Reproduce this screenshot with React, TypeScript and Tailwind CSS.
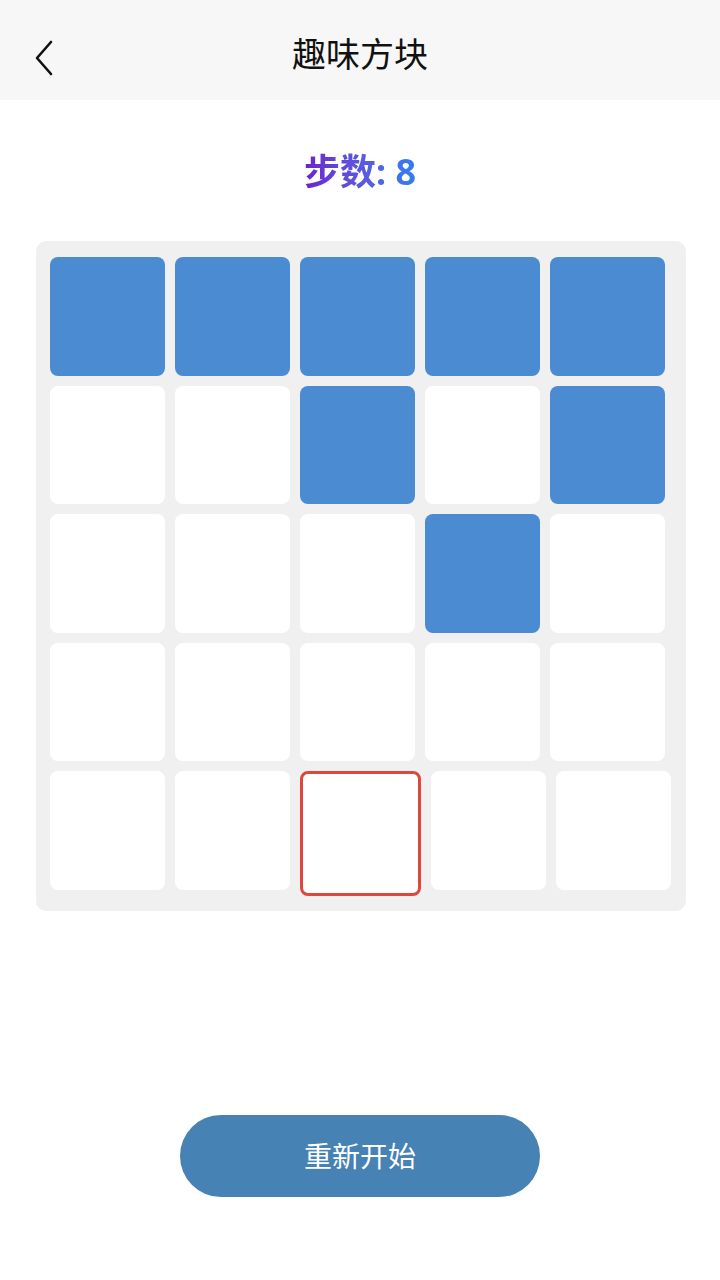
import React, { useState } from 'react';

// 5x5 棋盘初始状态：1 表示已点亮
const initialBoard: number[][] = [
  [1, 1, 1, 1, 1],
  [0, 0, 1, 0, 1],
  [0, 0, 0, 1, 0],
  [0, 0, 0, 0, 0],
  [0, 0, 0, 0, 0],
];

const App: React.FC = () => {
  const [board] = useState(initialBoard);
  const [steps] = useState(8);
  const [selected] = useState<[number, number]>([4, 2]);

  return (
    <div
      className="min-h-screen bg-white flex flex-col"
      style={{ fontFamily: '"Noto Sans", "Noto Sans CJK SC", sans-serif' }}
    >
      {/* 顶部导航栏 */}
      <header className="h-[100px] bg-[#f7f7f7] flex items-center relative">
        <button className="absolute left-[28px] top-[38px] w-[32px] h-[40px] flex items-center justify-center">
          <svg width="24" height="38" viewBox="0 0 24 38" fill="none">
            <path d="M19 3 L5 19 L19 35" stroke="#111" strokeWidth="2.6" strokeLinecap="round" strokeLinejoin="round" />
          </svg>
        </button>
        <h1 className="w-full text-center text-[34px] text-[#111] leading-none pt-[8px]">趣味方块</h1>
      </header>

      {/* 步数 */}
      <div className="mt-[48px] flex justify-center">
        <span className="text-[36px] font-bold leading-[48px] bg-gradient-to-r from-[#6b1fcf] to-[#2c7fee] bg-clip-text text-transparent">
          步数: {steps}
        </span>
      </div>

      {/* 游戏网格 */}
      <div className="mt-[45px] mx-[36px] w-[650px] bg-[#f0f0f0] rounded-[10px] pl-[9px] pt-[11px] pb-[10px]">
        {board.map((row, r) => (
          <div key={r} className="flex">
            {row.map((v, c) => {
              const isSel = selected[0] === r && selected[1] === c;
              return (
                <div
                  key={c}
                  className={
                    'box-content w-[115px] h-[118.5px] m-[5px] shrink-0 rounded-[8px] ' +
                    (v ? 'bg-[#4a8bd1] ' : 'bg-white ') +
                    (isSel ? 'border-[3.5px] border-[#e0463c]' : '')
                  }
                />
              );
            })}
          </div>
        ))}
      </div>

      {/* 重新开始 */}
      <div className="mt-[204px] flex justify-center">
        <button className="w-[360px] h-[82px] rounded-full bg-[#4682b4] text-white text-[28px]">
          重新开始
        </button>
      </div>
    </div>
  );
};

export default App;
